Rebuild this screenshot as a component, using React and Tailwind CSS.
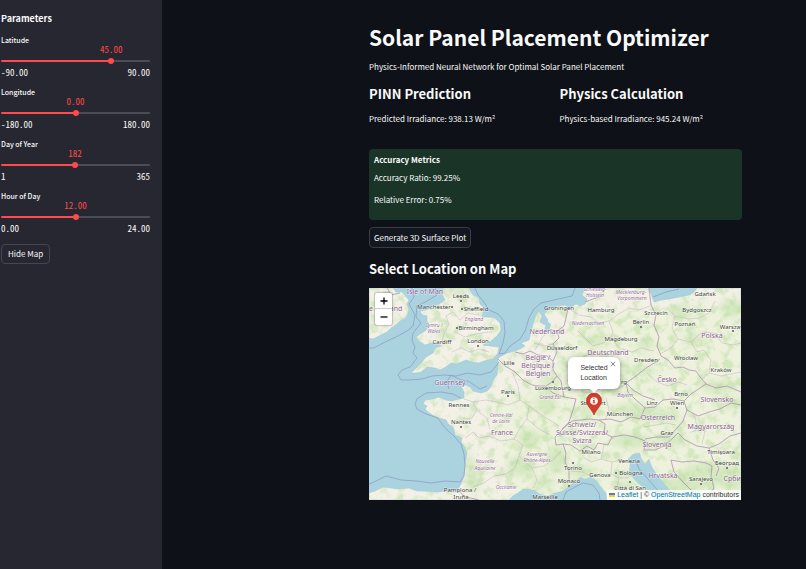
import React, { useState } from 'react';

const LAND = [
    // Ireland
    'M0 0L24 0L27 4L33 4L40 12L38 16L40 22L37 30L31 33L28 36L22 40L18 44L10 48L4 51L0 50Z',
    // Great Britain
    'M74 0L73 6L76 12L70 16L62 19L58 22L51 23L53 27L58 28L58 33L61 38L56 43L51 46L47 49L50 53L56 57L62 55L69 55L72 58L66 60L64 65L57 69L52 75L47 80L42 85L48 85L52 84L58 79L66 80L71 82L77 79L82 75L88 76L97 72L103 74L110 75L118 72L124 71L129 65L130 59L121 58L114 57L122 53L128 48L132 42L131 35L126 30L119 29L113 29L115 20L111 16L110 10L104 7L100 0Z',
    // Mainland
    'M0 205L6 203L14 199L22 200L30 201L40 200L48 203L57 203L66 204L77 203L84 203L89 201L93 194L95 186L96 176L98 165L95 158L92 154L93 150L86 147L85 142L84 139L79 136L77 132L70 130L65 128L59 124L56 121L58 118L54 116L56 112L64 111L70 109L77 112L83 113L90 111L95 110L95 104L92 98L97 97L101 99L104 103L112 105L118 103L122 99L124 92L128 87L129 78L129 70L138 65L146 63L151 61L156 58L152 55L160 52L162 44L164 36L167 27L170 23L173 28L171 34L176 37L179 32L175 26L180 21L188 18L196 17L201 20L207 16L211 18L216 16L218 11L213 7L216 0L280 0L283 8L285 14L292 12L300 11L310 9L320 7L325 4L328 0L372 0L372 212L300 212L302 203L295 195L288 187L283 179L280 171L276 176L272 170L271 165L264 166L259 171L261 176L260 184L264 190L270 196L278 202L286 212L238 212L237 205L232 199L227 192L222 189L216 191L211 189L206 194L201 197L194 203L185 205L179 208L171 206L165 202L159 201L154 201L150 204L144 208L140 212L0 212Z',
];

const BORDERS = [
    'M88 202L97 209L110 212M129 71L136 78L146 84L154 92L163 97L170 98L176 98L184 105L195 109L207 111L204 122L200 134L193 142L186 149L187 157L194 156L197 165L196 174L200 183L200 195',
    'M146 64L154 66L161 63L169 67L178 68L184 73L184 82L188 88L183 94L177 98M184 73L188 64L184 56L190 50L188 43L195 38L197 30L199 20M188 88L192 93L195 109',
    'M193 141L203 133L211 132L221 131L230 132L236 136L235 145L243 149L239 157L229 155L225 162L218 158L211 163L202 157L194 156',
    'M230 132L241 131L252 134L262 129L271 131L276 120L266 111L259 104L257 95L267 88L277 80L287 74L291 71M243 149L255 147L266 149L276 153L275 163',
    'M280 0L282 17L287 27L285 37L290 49L288 58L292 68L299 72L306 80L314 79L320 82L327 83L331 89L337 96L347 100L358 98L372 104',
    'M276 120L286 119L294 112L304 111L315 113L318 122L314 133L309 139L300 149L287 149L276 151M315 113L322 106L331 100L337 96M318 122L329 128L340 124L351 121L362 115L372 117',
    'M276 162L286 162L295 158L304 150L309 145L316 152L328 158L340 160L350 156L361 148L372 145M340 160L344 172L350 180L347 188M302 172L313 174L325 173L337 175L343 178L342 188L345 200L338 210M302 172L305 184L314 194L323 203L333 210',
    'M257 95L264 102L274 108L286 112M216 14L224 11L233 8',
    'M18 0L22 7L31 5',
];

const REGIONS = [
    'M95 111L104 114L108 122L102 131L94 130M104 114L117 112L128 114L139 117L151 112L160 118L158 131L151 140L145 151L132 153L120 148L110 150L104 144L96 150M108 122L118 130L121 141M145 151L154 157L150 168L146 180L137 186L125 188L115 195L104 199M150 168L163 180L175 178L185 171L192 163M163 180L168 192L164 200M160 118L171 126L182 133L190 138M151 112L149 98L144 86M158 131L170 141L181 147',
    'M199 20L210 27L222 29L230 35L240 33L248 27L260 20L270 22L281 18M209 43L217 51L224 58L234 55L242 49L250 60L263 64L272 60L285 63M197 79L207 74L215 68L224 66M198 92L208 96L215 105L224 104M224 104L233 100L248 101L256 97M237 110L240 122L236 132M240 33L244 44L242 49M165 55L176 58L184 56M166 62L173 50L180 41L188 43',
    'M298 20L306 28L303 40L309 51L302 60L291 66M306 28L320 31L330 30L340 25L346 13M309 51L322 54L328 64L335 62L342 72L340 85L333 91M322 54L333 44L345 45L353 55L364 57L372 55M340 85L352 88L372 84M278 85L288 94L299 98L309 94L318 97',
    'M214 169L222 174L232 171L243 174L252 172L260 174M232 171L235 157M243 174L242 186L250 190L260 190M202 183L214 184L222 189M250 190L248 201L255 212M275 139L287 137L297 135L307 137M325 126L328 138L336 143L333 156',
    'M77 28L84 24L91 32L99 25L110 27M75 45L80 36L77 28M75 45L73 55M83 64L92 60L101 64L111 61L120 64M86 44L96 49L107 46L119 44',
];

const SEA_LINES = [
    'M43 0L45 9L40 16L46 27L44 38L38 43L27 49L14 55L5 60L0 60',
    'M66 0L68 7L58 13L48 18L47 29L52 35L44 45L43 53L46 59L44 65L48 70L41 79L33 82L29 87L32 92L41 92L53 91L63 88L75 87L87 88L98 85L111 87L122 84L127 78L130 74',
    'M130 66L136 65L141 58L151 51L156 43L160 30L165 21L172 15L189 11L203 8L206 0M130 66L134 55L136 45L135 33L129 26L120 22L115 14L109 7L106 0',
    'M92 110L84 106L72 104L57 105L48 111L46 116L48 121L57 126L69 130L73 136L78 142L85 148L92 156L95 166L96 177L95 188L91 194L76 193L62 195L47 193L32 192L17 188L5 194L0 196',
    'M80 101L78 94L82 87L92 92L99 93L111 101L118 98',
    'M284 9L297 4L310 1M266 171L270 181L279 191L290 204M194 212L197 204L206 199L214 195L224 197L230 205L231 212',
];

const WOODS = [
    [104, 190, 7, 16], [100, 178, 4, 13], [215, 90, 18, 9], [244, 93, 14, 9], [227, 53, 12, 6], [216, 123, 6, 10],
    [265, 122, 20, 6], [288, 128, 24, 6], [263, 153, 20, 7], [308, 201, 24, 12], [337, 187, 26, 12], [350, 99, 18, 6],
    [363, 20, 12, 9], [312, 24, 12, 8], [326, 52, 12, 6], [276, 56, 10, 5], [177, 115, 10, 11], [160, 150, 12, 9],
    [188, 171, 10, 14], [152, 178, 14, 10], [74, 45, 6, 8], [90, 4, 8, 6], [181, 93, 10, 5], [213, 184, 16, 5],
    [360, 115, 16, 6], [302, 151, 14, 7], [273, 83, 14, 5], [258, 198, 14, 5], [365, 190, 10, 14], [174, 195, 12, 5],
];

// x, y of the middle of the label
const COUNTRIES = [
    ['Isle of Man', 56, 4], ['and', 27, 21], ['e', 2, 21], ['Guernsey', 81, 95], ['Nederland', 178, 44], ['België /', 169, 70],
    ['Belgique /', 169, 78], ['Belgien', 169, 86], ['Deutschland', 239, 65], ['Polska', 343, 48], ['Česko', 298, 92],
    ['France', 133, 145], ['Schweiz/', 213, 137], ['Suisse/Svizzera/', 213, 145], ['Svizra', 213, 153],
    ['Slovensko', 348, 112], ['Österreich', 289, 130], ['Magyarország', 342, 139], ['Slovenija', 288, 157],
    ['Hrvatska', 294, 188], ['Србија', 366, 191],
];

const STATES = [
    ['England', 105, 31], ['Cymru /', 65, 37], ['Wales', 65, 43], ['Schleswig-', 226, 1], ['Holstein', 226, 7],
    ['Niedersachsen', 219, 35], ['Mecklenburg-', 262, 4], ['Vorpommern', 263, 10], ['Grand Est', 181, 109],
    ['Centre-Val', 132, 127], ['de Loire', 132, 133], ['Nouvelle', 116, 173], ['Aquitaine', 116, 180],
    ['Auvergne', 168, 166], ['Rhône-Alpes', 168, 172], ['Occitanie', 137, 199], ['Bayern', 256, 107],
];

const CITIES = [
    ['Leeds', 92, 8], ['Manchester', 65, 19], ['Sheffield', 107, 21], ['Birmingham', 107, 40], ['Cardiff', 73, 54],
    ['London', 109, 53], ['Groningen', 190, 20], ['Hamburg', 232, 22], ['Düsseldorf', 193, 60], ['Magdeburg', 252, 51],
    ['Lille', 140, 75], ['Paris', 139, 104], ['Luxembourg', 184, 100], ['Gdańsk', 336, 6], ['Szczecin', 287, 25],
    ['Bydgoszcz', 328, 22], ['Berlin', 272, 34], ['Poznań', 316, 36], ['Warszawa', 365, 39], ['Dresden', 277, 72],
    ['Wrocław', 317, 70], ['Kraków', 352, 82], ['rg', 255, 94], ['Brno', 312, 106], ['Rennes', 90, 117],
    ['Nantes', 92, 134], ['Pamplona /', 91, 202], ['Iruña', 92, 209], ['Stuttgart', 224, 115], ['München', 251, 126],
    ['Milano', 222, 164], ['Torino', 204, 180], ['Genova', 231, 187], ['Monaco', 200, 193], ['Marseille', 176, 209],
    ['Linz', 283, 115], ['Wien', 308, 115], ['Graz', 298, 145], ['Timișoara', 352, 164], ['Београд', 358, 175],
    ['Venezia', 260, 173], ['Bologna', 262, 185], ['Sarajevo', 332, 191], ['Città di San', 261, 200],
];

const DOTS = [
    [83, 19], [93, 21], [88, 40], [109, 58], [272, 39], [184, 94], [364, 43], [308, 120], [92, 139], [200, 198],
    [247, 185], [261, 194], [332, 196], [358, 180], [139, 108], [92, 13], [204, 175],
];

const Labels = ({ items, className }) => (
    <g className={className} textAnchor="middle" stroke="#ffffff" strokeOpacity="0.6" strokeWidth="1" paintOrder="stroke">
        {items.map(([name, x, y]) => (
            <text key={name} x={x} y={y + 2}>{name}</text>
        ))}
    </g>
);

const EuropeMap = () => (
    <svg
        viewBox="0 0 372 212"
        preserveAspectRatio="xMidYMid slice"
        className="block h-full w-full"
        role="img"
        aria-label="Map of Europe"
    >
        <defs>
            <clipPath id="land">
                {LAND.map((d) => <path key={d} d={d} />)}
            </clipPath>
            <filter id="soft"><feGaussianBlur stdDeviation="3" /></filter>
            <filter id="forest" x="0" y="0" width="1" height="1" colorInterpolationFilters="sRGB">
                <feTurbulence type="fractalNoise" baseFrequency="0.11" numOctaves="4" seed="7" />
                <feColorMatrix values="0 0 0 0 0.72  0 0 0 0 0.86  0 0 0 0 0.62  4 0 0 0 -1.9" />
            </filter>
        </defs>
        <rect width="372" height="212" fill="#aad3df" />
        {LAND.map((d) => <path key={d} d={d} fill="#f3f1e6" stroke="#9cc3d2" strokeWidth="0.5" />)}
        <g clipPath="url(#land)">
            <path d="M120 120L180 90L205 30L372 15L372 212L150 212Z" fill="#e9f2d6" opacity="0.55" filter="url(#soft)" />
            <g filter="url(#soft)" fill="#c9e3b3" opacity="0.65">
                {WOODS.map(([x, y, rx, ry]) => (
                    <ellipse key={`${x}-${y}`} cx={x} cy={y} rx={rx} ry={ry} />
                ))}
            </g>
            <rect width="372" height="212" filter="url(#forest)" opacity="0.5" />
        </g>
        <g fill="#aad3df">
            <path d="M178 33L182 36L180 43L175 45L176 39Z" />
            <path d="M187 149L193 146L192 148Z" />
            <path d="M320 145L328 141L327 143Z" />
            <path d="M214 157L216 162L215 158Z" />
        </g>
        <g fill="none" strokeLinejoin="round">
            {REGIONS.map((d) => <path key={d} d={d} stroke="#b79fba" strokeWidth="0.6" opacity="0.65" />)}
            {BORDERS.map((d) => <path key={d} d={d} stroke="#a98bb0" strokeWidth="1" opacity="0.75" />)}
            {SEA_LINES.map((d) => <path key={d} d={d} stroke="#8f9fc4" strokeWidth="1" opacity="0.8" />)}
        </g>
        {DOTS.map(([x, y]) => (
            <rect key={`${x}-${y}`} x={x - 1} y={y - 1} width="2" height="2" fill="#7c7c7c" />
        ))}
        <Labels items={STATES} className="fill-[#9a6fa3] font-['Noto_Sans',sans-serif] text-[5px] italic" />
        <Labels items={COUNTRIES} className="fill-[#8d5f96] font-['Noto_Sans',sans-serif] text-[7px]" />
        <Labels items={CITIES} className="fill-[#3d3d3d] font-['Noto_Sans',sans-serif] text-[6px]" />
    </svg>
);

const Marker = () => (
    <svg viewBox="0 0 16 22" className="block h-[22px] w-4" aria-hidden="true">
        <path d="M8 22C6.500 17 0.500 13 0.500 7.500A7.500 7.500 0 0 1 15.500 7.500C15.500 13 9.500 17 8 22Z" fill="#d33d29" stroke="#a82b1c" strokeWidth="0.6" />
        <circle cx="8" cy="8" r="3.800" fill="#ffffff" />
        <path d="M7.300 6.200h1.400v-1h-1.400zM6.800 7.100h1.900v2.300h0.600v0.800h-2.600v-0.800h0.600v-1.500h-0.500z" fill="#d33d29" />
    </svg>
);

const LocationMap = () => (
    <div className="relative mt-[9px] mr-px h-[212px] overflow-hidden bg-[#aad3df] font-['Liberation_Sans',sans-serif]">
        <EuropeMap />

        {/* Zoom control */}
        <div className="absolute top-[5px] left-1.5 flex w-[17px] flex-col rounded-xs bg-white text-black shadow-[0_0_1px_1px_rgba(0,0,0,0.2)]">
            <button aria-label="Zoom in" className="flex h-4 items-center justify-center border-b border-[#cccccc]">
                <svg viewBox="0 0 8 8" className="h-2 w-2"><path d="M4 0.500v7M0.500 4h7" stroke="currentColor" strokeWidth="1.300" /></svg>
            </button>
            <button aria-label="Zoom out" className="flex h-4 items-center justify-center">
                <svg viewBox="0 0 8 8" className="h-2 w-2"><path d="M0.500 4h7" stroke="currentColor" strokeWidth="1.300" /></svg>
            </button>
        </div>

        {/* Marker and its popup */}
        <div className="absolute top-[69px] left-1/2 ml-[13px] flex w-[52px] flex-col items-center">
            <div className="relative flex h-8 w-full items-center justify-center rounded-md bg-white text-[7px] leading-[10px] text-[#333333] shadow-[0_1px_5px_rgba(0,0,0,0.4)]">
                <p>Selected<br />Location</p>
                <button aria-label="Close popup" className="absolute top-1 right-1 h-1.5 w-1.5 text-[#757575]">
                    <svg viewBox="0 0 6 6" className="block h-full w-full"><path d="M0.800 0.800l4.400 4.400M5.200 0.800l-4.400 4.400" stroke="currentColor" strokeWidth="0.900" /></svg>
                </button>
            </div>
            <div className="relative h-1 w-2 bg-white [clip-path:polygon(0_0,100%_0,50%_100%)]"></div>
            <Marker />
        </div>

        <div className="absolute right-0 bottom-0 flex h-[10px] items-center gap-0.5 bg-white/80 px-0.5 text-[7px] leading-[10px] text-[#333333]">
            <svg viewBox="0 0 6 4" className="h-1 w-1.5" aria-hidden="true">
                <path fill="#4c7be1" d="M0 0h6v2H0z" />
                <path fill="#ffd500" d="M0 2h6v2H0z" />
            </svg>
            <p>
                <a href="#leaflet" className="text-[#0078a8]">Leaflet</a> | © <a href="#osm" className="text-[#0078a8]">OpenStreetMap</a> contributors
            </p>
        </div>
    </div>
);

const Slider = ({ id, label, min, max, step, digits, value, onChange }) => {
    const percent = ((value - min) / (max - min)) * 100;

    return (
        <div>
            <label htmlFor={id} className="block text-[7px] leading-3 font-medium">{label}</label>
            <div className="mx-[3px] h-2 font-['Noto_Sans_Mono_CJK_SC','DejaVu_Sans_Mono',monospace] text-[9px] leading-2 text-[#ff4b4b]">
                <output htmlFor={id} className="relative inline-block -translate-x-1/2" style={{ left: `${percent}%` }}>
                    {value.toFixed(digits)}
                </output>
            </div>
            <div className="flex h-[13px] items-center">
                <input
                    id={id}
                    type="range"
                    min={min}
                    max={max}
                    step={step}
                    value={value}
                    onChange={(e) => onChange(Number(e.target.value))}
                    className="h-0.5 w-full appearance-none rounded-full [&::-webkit-slider-thumb]:h-1.5 [&::-webkit-slider-thumb]:w-1.5 [&::-webkit-slider-thumb]:appearance-none [&::-webkit-slider-thumb]:rounded-full [&::-webkit-slider-thumb]:bg-[#ff4b4b]"
                    style={{ background: `linear-gradient(to right, #ff4b4b ${percent}%, #4b4c56 ${percent}%)` }}
                />
            </div>
            <div className="flex h-[11px] items-center justify-between font-['Noto_Sans_Mono_CJK_SC','DejaVu_Sans_Mono',monospace] text-[9px] leading-[11px]">
                <span>{min.toFixed(digits)}</span>
                <span>{max.toFixed(digits)}</span>
            </div>
        </div>
    );
};

const App = () => {
    const [latitude, setLatitude] = useState(45);
    const [longitude, setLongitude] = useState(0);
    const [day, setDay] = useState(182);
    const [hour, setHour] = useState(12);
    const [showMap, setShowMap] = useState(true);

    return (
        <div className="flex min-h-screen bg-[#0e1117] font-['Noto_Sans_CJK_SC',sans-serif] text-[#fafafa]">
            <aside className="w-[162px] shrink-0 bg-[#262730] pt-3 pr-3 pl-px">
                <h2 className="mb-2 text-[9px] leading-[14px] font-bold">Parameters</h2>
                <div className="flex flex-col gap-2">
                    <Slider id="latitude" label="Latitude" min={-90} max={90} step={0.01} digits={2} value={latitude} onChange={setLatitude} />
                    <Slider id="longitude" label="Longitude" min={-180} max={180} step={0.01} digits={2} value={longitude} onChange={setLongitude} />
                    <Slider id="day" label="Day of Year" min={1} max={365} step={1} digits={0} value={day} onChange={setDay} />
                    <Slider id="hour" label="Hour of Day" min={0} max={24} step={0.01} digits={2} value={hour} onChange={setHour} />
                </div>
                <button
                    onClick={() => setShowMap(!showMap)}
                    className="mt-2.5 h-5 rounded border border-[#45464f] px-1.5 text-[8px] leading-3"
                >
                    {showMap ? 'Hide Map' : 'Show Map'}
                </button>
            </aside>

            <main className="min-w-0 flex-1 pt-[21px] pr-16 pl-[207px]">
                <h1 className="text-[21px] leading-8 font-bold whitespace-nowrap">Solar Panel Placement Optimizer</h1>
                <p className="mt-[7px] text-[8px] leading-[14px]">Physics-Informed Neural Network for Optimal Solar Panel Placement</p>

                <div className="mt-2.5 grid grid-cols-2 gap-2">
                    <div>
                        <h3 className="text-[13px] leading-5 font-bold">PINN Prediction</h3>
                        <p className="mt-2 text-[8px] leading-[14px]">Predicted Irradiance: 938.13 W/m²</p>
                    </div>
                    <div>
                        <h3 className="text-[13px] leading-5 font-bold">Physics Calculation</h3>
                        <p className="mt-2 text-[8px] leading-[14px]">Physics-based Irradiance: 945.24 W/m²</p>
                    </div>
                </div>

                <section className="mt-[23px] rounded bg-[#1a3528] px-[5px] pt-[5px] pb-3.5 text-[8px] leading-3">
                    <h4 className="font-bold">Accuracy Metrics</h4>
                    <p className="mt-1.5">Accuracy Ratio: 99.25%</p>
                    <p className="mt-2.5">Relative Error: 0.75%</p>
                </section>

                <button className="mt-[7px] block h-[21px] rounded border border-[#3a3c44] bg-[#131720] px-1 text-[8px] leading-3">
                    Generate 3D Surface Plot
                </button>

                <h3 className="mt-[11px] text-[13px] leading-5 font-bold">Select Location on Map</h3>
                {showMap && <LocationMap />}
            </main>
        </div>
    );
};

export default App;
